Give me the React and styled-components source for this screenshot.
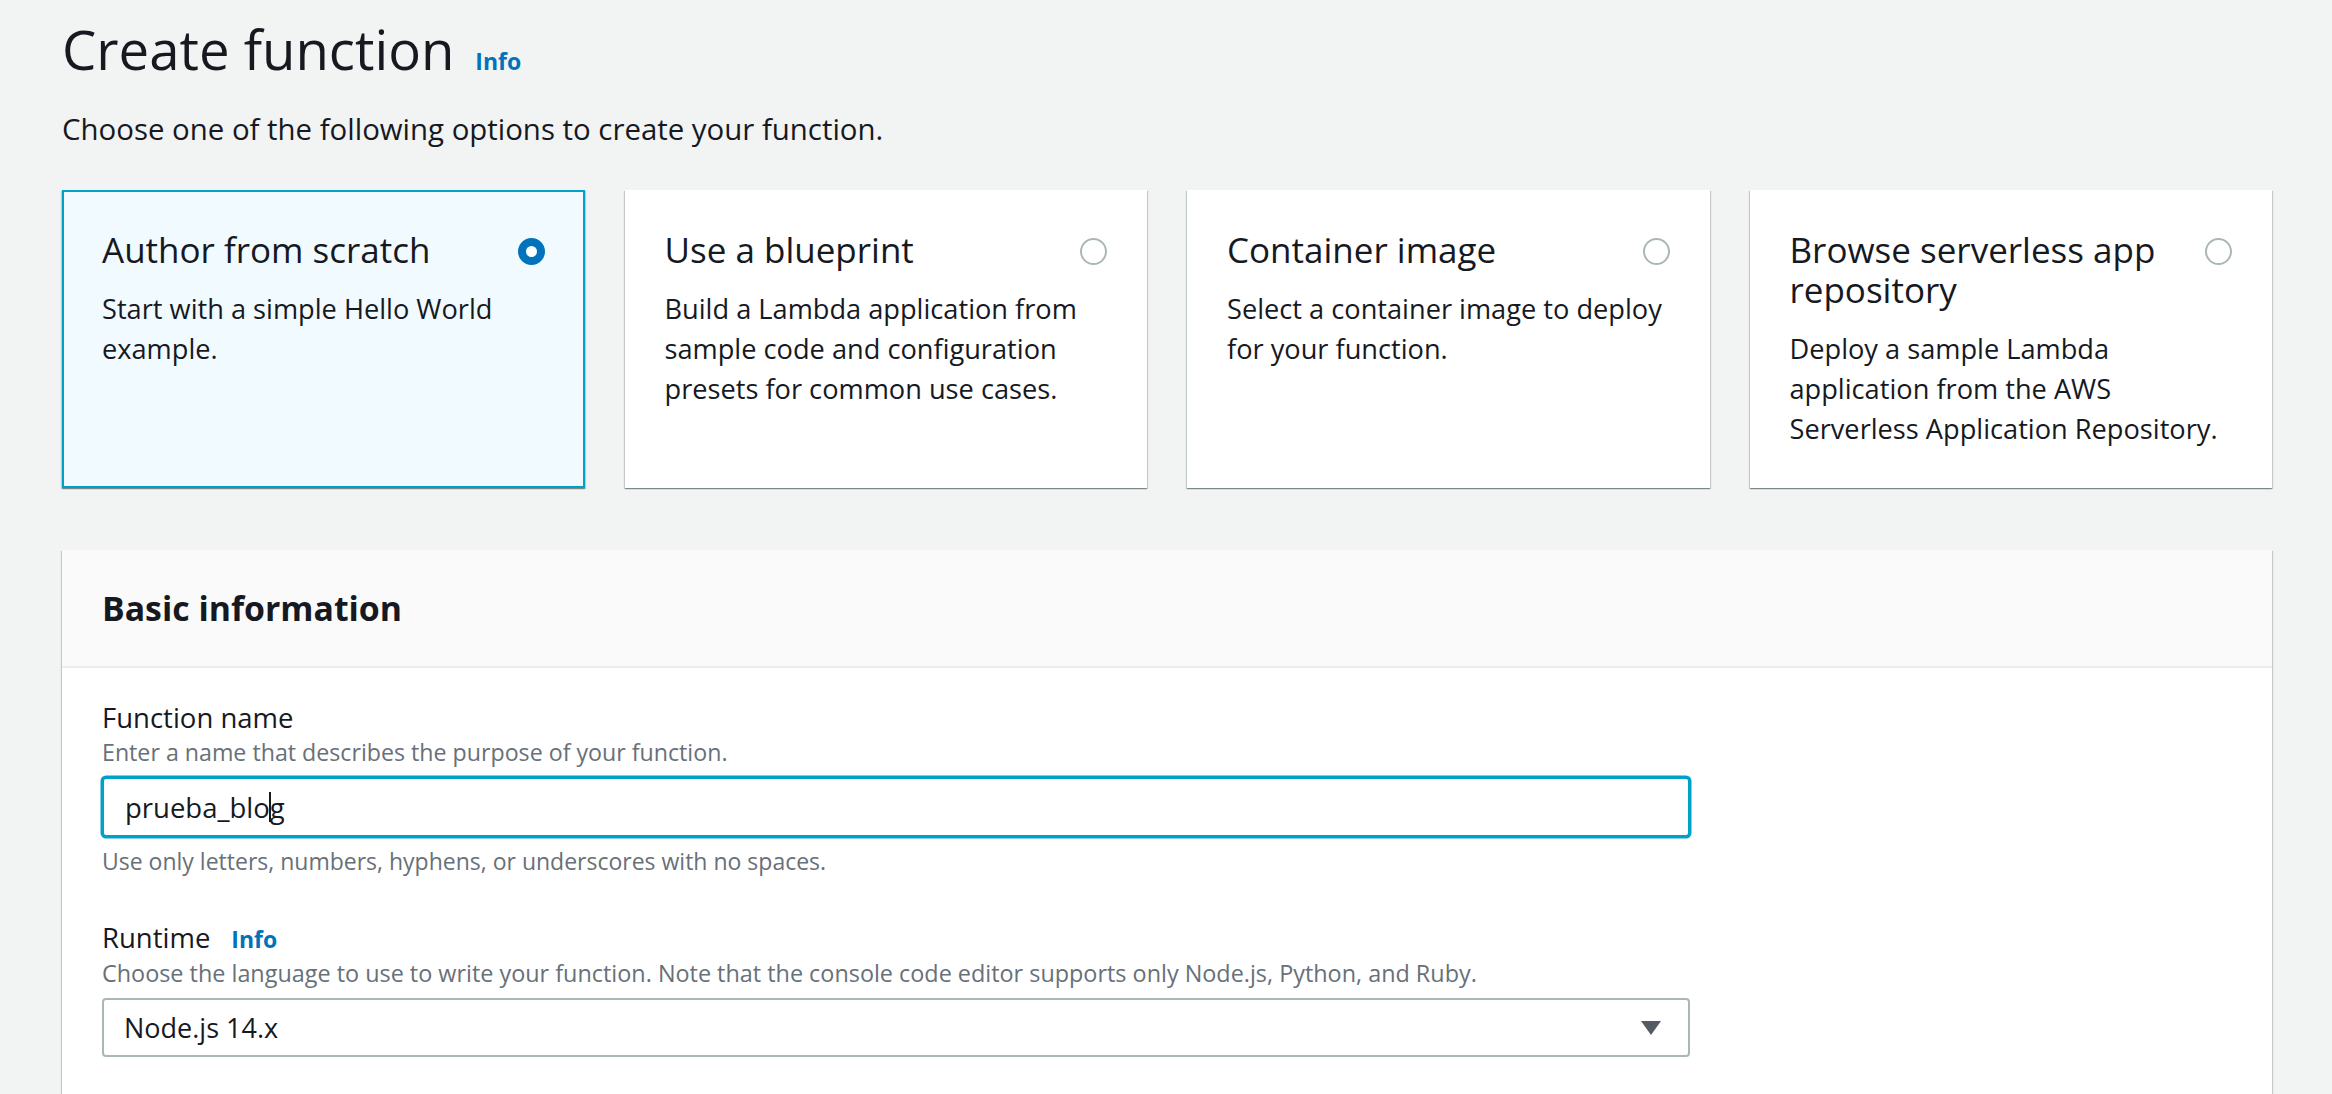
import React from 'react'
import styled, { createGlobalStyle } from 'styled-components'

const GlobalStyle = createGlobalStyle`
    html, body {
        margin: 0;
        padding: 0;
        background: #f2f3f3;
    }
    body {
        font-family: "Open Sans", "Noto Sans", sans-serif;
        color: #16191f;
    }
`

const options = [
    { title: 'Author from scratch', desc: 'Start with a simple Hello World example.', selected: true },
    { title: 'Use a blueprint', desc: 'Build a Lambda application from sample code and configuration presets for common use cases.' },
    { title: 'Container image', desc: 'Select a container image to deploy for your function.' },
    { title: 'Browse serverless app repository', desc: 'Deploy a sample Lambda application from the AWS Serverless Application Repository.' },
]

function App() {
  return (
    <Page>
        <GlobalStyle />
        <Header>
            <Title>Create function</Title>
            <InfoLink href="#">Info</InfoLink>
        </Header>
        <Subtitle>Choose one of the following options to create your function.</Subtitle>

        <Cards>
            {options.map(o => (
                <Card key={o.title} selected={o.selected}>
                    <CardTop>
                        <CardTitle>{o.title}</CardTitle>
                        <Radio selected={o.selected} />
                    </CardTop>
                    <CardDesc>{o.desc}</CardDesc>
                </Card>
            ))}
        </Cards>

        <Panel>
            <PanelHeader>
                <PanelTitle>Basic information</PanelTitle>
            </PanelHeader>
            <PanelBody>
                <Field>
                    <Label>Function name</Label>
                    <Hint>Enter a name that describes the purpose of your function.</Hint>
                    <Input>
                        prueba_blo<Caret />g
                    </Input>
                    <Constraint>Use only letters, numbers, hyphens, or underscores with no spaces.</Constraint>
                </Field>
                <Field>
                    <Label>
                        Runtime
                        <InfoLink href="#">Info</InfoLink>
                    </Label>
                    <Hint wide>Choose the language to use to write your function. Note that the console code editor supports only Node.js, Python, and Ruby.</Hint>
                    <Select>
                        <span>Node.js 14.x</span>
                        <svg width="22" height="15" viewBox="0 0 22 15">
                            <path d="M1 1 H21 L11 15 Z" fill="#545b64" />
                        </svg>
                    </Select>
                </Field>
            </PanelBody>
        </Panel>
    </Page>
  )
}

export default App

const Page = styled.div`
    min-height: 100vh;
    box-sizing: border-box;
    padding: 13px 60px 0 62px;
    background: #f2f3f3;
`

const Header = styled.div`
    display: flex;
    align-items: baseline;
    gap: 21px;
`

const Title = styled.h1`
    margin: 0;
    font-size: 54.5px;
    line-height: 72px;
    font-weight: 400;
    color: #16191f;
`

const InfoLink = styled.a`
    font-size: 23px;
    font-weight: 700;
    color: #0073bb;
    text-decoration: none;
`

const Subtitle = styled.p`
    margin: 24px 0 0;
    font-size: 29.4px;
    line-height: 40px;
`

const Cards = styled.div`
    margin-top: 41px;
    display: grid;
    grid-template-columns: repeat(4, 1fr);
    gap: 40px;
`

const Card = styled.div`
    box-sizing: border-box;
    height: 298px;
    padding: 38px 38px 0 38px;
    border: 2px solid ${p => p.selected ? '#00a1c9' : 'transparent'};
    background: ${p => p.selected ? '#f1faff' : '#ffffff'};
    box-shadow: 0 1px 1px 0 rgba(0, 28, 36, 0.3), 1px 1px 1px 0 rgba(0, 28, 36, 0.15), -1px 1px 1px 0 rgba(0, 28, 36, 0.15);
`

const CardTop = styled.div`
    display: flex;
    justify-content: space-between;
    align-items: flex-start;
    gap: 24px;
`

const CardTitle = styled.div`
    font-size: 35px;
    line-height: 40px;
`

const Radio = styled.span`
    flex: none;
    box-sizing: border-box;
    width: 27px;
    height: 27px;
    margin-top: 8px;
    border-radius: 50%;
    border: ${p => p.selected ? '8px solid #0073bb' : '2px solid #aab7b8'};
    background: #ffffff;
`

const CardDesc = styled.div`
    margin-top: 19px;
    font-size: 27.2px;
    line-height: 40px;
`

const Panel = styled.div`
    margin-top: 62px;
    background: #ffffff;
    box-shadow: 0 1px 1px 0 rgba(0, 28, 36, 0.3), 1px 1px 1px 0 rgba(0, 28, 36, 0.15), -1px 1px 1px 0 rgba(0, 28, 36, 0.15);
    min-height: 560px;
`

const PanelHeader = styled.div`
    padding: 38px 40px 38px;
    background: #fafafa;
    border-bottom: 2px solid #eaeded;
`

const PanelTitle = styled.h2`
    margin: 0;
    font-size: 33.8px;
    line-height: 40px;
    font-weight: 700;
`

const PanelBody = styled.div`
    padding: 32px 40px;
    display: flex;
    flex-direction: column;
    gap: 43px;
`

const Field = styled.div`
    max-width: 1588px;
    display: flex;
    flex-direction: column;
`

const Label = styled.div`
    display: flex;
    align-items: baseline;
    gap: 21px;
    font-size: 27.5px;
    line-height: 36px;
`

const Hint = styled.div`
    font-size: ${p => p.wide ? '23.4px' : '23.2px'};
    line-height: 32px;
    color: #687078;
`

const Input = styled.div`
    box-sizing: border-box;
    height: 60px;
    margin-top: 9px;
    padding: 0 21px;
    display: flex;
    align-items: center;
    border: 2px solid #00a1c9;
    box-shadow: 0 0 0 1.5px #00a1c9;
    border-radius: 4px;
    font-size: 27.5px;
    background: #ffffff;
`

const Caret = styled.span`
    display: inline-block;
    width: 2px;
    height: 30px;
    margin: 0 -1px;
    background: #16191f;
`

const Constraint = styled.div`
    margin-top: 8px;
    font-size: 23px;
    line-height: 32px;
    color: #687078;
`

const Select = styled.div`
    box-sizing: border-box;
    height: 59px;
    margin-top: 9px;
    padding: 0 26px 0 20px;
    display: flex;
    align-items: center;
    justify-content: space-between;
    border: 2px solid #aab7b8;
    border-radius: 4px;
    font-size: 27px;
    background: #ffffff;
`
